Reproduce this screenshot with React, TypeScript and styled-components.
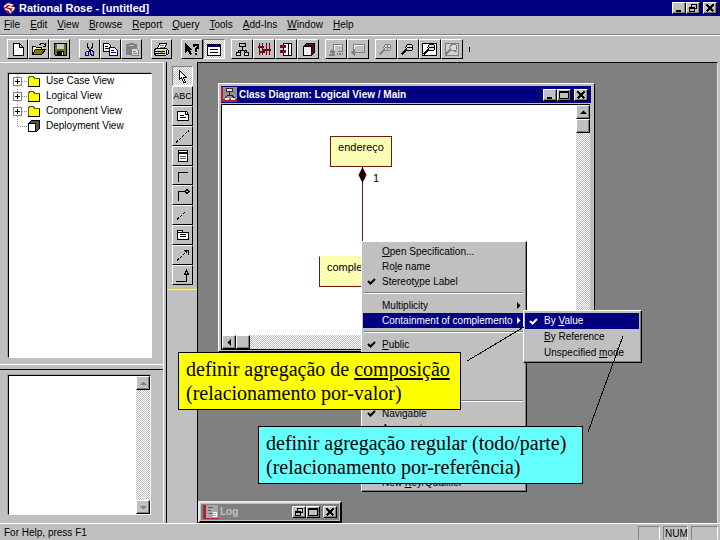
import React from "react";
import styled, { createGlobalStyle, css } from "styled-components";

const face = "#c0c0c0";
const shade = "#808080";
const navy = "#000080";
const maroon = "#701818";
const dither = "repeating-conic-gradient(#ffffff 0 25%, #c0c0c0 0 50%) 0 0 / 2px 2px";

const GlobalStyle = createGlobalStyle`
  * { box-sizing: border-box; }
  body { margin: 0; background: ${face}; }
  button, textarea {
    font: inherit; color: inherit; margin: 0; padding: 0;
    border: 0; border-radius: 0; background: none; text-align: left;
  }
  ul { list-style: none; margin: 0; padding: 0; }
  u { text-underline-offset: 1px; }
  svg { display: block; flex: none; }
`;

const raised = css`
  background: ${face};
  border: 1px solid;
  border-color: #ffffff #000000 #000000 #ffffff;
`;

const Shell = styled.div`
  position: relative;
  display: flex;
  flex-direction: column;
  min-height: 100vh;
  overflow: hidden;
  background: ${face};
  color: #000000;
  font: 10px/12px "Liberation Sans", Arial, sans-serif;
`;

const TitleBar = styled.header`
  display: flex;
  align-items: center;
  gap: 3px;
  height: 16px;
  padding: 0 3px 0 2px;
  background: ${navy};
  color: #ffffff;
`;

const Title = styled.h1`
  flex: 1;
  margin: 0;
  font-size: 10px;
  line-height: 14px;
  font-weight: bold;
  white-space: nowrap;
`;

const AppTitle = styled(Title)`
  font-size: 11px;
`;

const Controls = styled.div`
  display: flex;
`;

const ControlButton = styled.button<{ $gap?: boolean }>`
  ${raised}
  width: 14px;
  height: 12px;
  margin-left: ${(p) => (p.$gap ? 3 : 0)}px;
  box-shadow: inset -1px -1px ${shade};
  color: #000000;
`;

const MenuBar = styled.nav`
  display: flex;
  align-items: center;
  gap: 10px;
  height: 19px;
  padding: 0 4px;
  border-bottom: 1px solid ${shade};
`;

const Toolbar = styled.div`
  display: flex;
  align-items: center;
  height: 27px;
  padding: 0 0 0 7px;
  border-top: 1px solid #ffffff;
`;

const ToolGroup = styled.div<{ $wide?: boolean }>`
  display: flex;
  margin-right: ${(p) => (p.$wide ? 6 : 9)}px;
  > button { width: ${(p) => (p.$wide ? 22 : 21)}px; }
`;

const ToolButton = styled.button<{ $pressed?: boolean }>`
  ${raised}
  height: 20px;
  overflow: hidden;
  ${(p) =>
    p.$pressed &&
    css`
      background: ${dither};
      border-color: ${shade} #ffffff #ffffff ${shade};
    `}
`;

const TextGlyph = styled.span`
  display: block;
  text-align: center;
  font-size: 9px;
`;

const GripMark = styled.span`
  width: 1px;
  height: 5px;
  background: #000000;
`;

const Workspace = styled.main`
  display: grid;
  grid-template-columns: 163px 35px 1fr;
  flex: 1;
  padding-right: 2px;
`;

const Sidebar = styled.aside`
  display: grid;
  grid-template-rows: 302px 1fr;
  border-right: 1px solid #ffffff;
  border-top: 1px solid #ffffff;
`;

const TreePane = styled.section`
  display: flex;
  min-width: 0;
  padding: 10px 7px 6px 8px;
  border-bottom: 1px solid #ffffff;
`;

const NotesPane = styled.section`
  display: flex;
  min-width: 0;
  margin-top: 4px;
  padding: 5px 8px 8px 8px;
  border-top: 1px solid #000000;
`;

const Sunken = styled.div`
  display: flex;
  flex: 1;
  min-width: 0;
  margin-right: 4px;
  background: #ffffff;
  border: 1px solid;
  border-color: #000000 #ffffff #ffffff #000000;
  box-shadow: -1px -1px #a0a0a0;
`;

const SidebarEdge = styled(Sidebar)`
  margin-right: -1px;
  padding-right: 0;
`;

const Tree = styled.ul`
  padding: 0 0 0 4px;
`;

const TreeItem = styled.button`
  display: flex;
  align-items: center;
  gap: 5px;
  height: 14px;
  margin-bottom: 1px;
  white-space: nowrap;
  font-size: 10px;
`;

const Notes = styled.textarea`
  flex: 1;
  width: 0;
  min-width: 0;
  resize: none;
  outline: 0;
  background: #ffffff;
`;

const VScroll = styled.div`
  display: flex;
  flex: none;
  flex-direction: column;
  width: 14px;
  background: ${dither};
`;

const HScroll = styled.div`
  display: flex;
  height: 14px;
  background: ${dither};
`;

const ScrollButton = styled.button<{ $push?: boolean }>`
  ${raised}
  display: flex;
  align-items: center;
  justify-content: center;
  width: 14px;
  height: 14px;
  margin-top: ${(p) => (p.$push ? "auto" : 0)};
  box-shadow: inset -1px -1px ${shade};
`;

const Palette = styled.aside`
  padding: 4px 3px 0 5px;
  border-left: 1px solid #000000;
  border-right: 1px solid #000000;
  margin-left: 3px;
`;

const PaletteGrid = styled.div`
  display: grid;
  grid-template-rows: repeat(11, 1fr);
  height: 219px;
  > button { height: auto; width: 21px; }
`;

const PaletteEnd = styled.div`
  height: 2px;
  margin: 3px -3px 0 -5px;
  border-top: 1px solid #d8c850;
  border-bottom: 1px solid #f0e8b0;
`;

const Desktop = styled.section`
  position: relative;
  background: ${shade};
  border-top: 1px solid #000000;
  border-right: 1px solid #e0e0e0;
`;

const DiagramWindow = styled.section`
  position: absolute;
  left: 20px;
  top: 20px;
  width: 377px;
  height: 269px;
  display: flex;
  flex-direction: column;
  padding: 2px 3px 1px 2px;
  background: ${face};
  border: 1px solid;
  border-color: #ffffff #000000 #000000 #ffffff;
`;

const ChildTitle = styled.header`
  display: flex;
  align-items: center;
  gap: 2px;
  height: 17px;
  padding-right: 3px;
  background: ${navy};
  color: #ffffff;
`;

const DiagramView = styled.div`
  display: grid;
  grid-template-columns: 1fr 14px;
  grid-template-rows: 1fr 14px;
  flex: 1;
  margin: 1px 1px 0 0;
  border: 1px solid #000000;
  border-right: 0;
`;

const Canvas = styled.div`
  position: relative;
  overflow: hidden;
  background: #ffffff;
`;

const ClassBox = styled.div<{ $x: number; $y: number; $w: number; $open?: boolean }>`
  position: absolute;
  left: ${(p) => p.$x}px;
  top: ${(p) => p.$y}px;
  width: ${(p) => p.$w}px;
  height: 31px;
  padding-top: 4px;
  text-align: center;
  font-size: 11px;
  line-height: 13px;
  border: 1px solid ${maroon};
  border-top-color: ${(p) => (p.$open ? "#ffffa8" : maroon)};
  background: repeating-conic-gradient(#ffff78 0 25%, #fffff0 0 50%) 0 0 / 4px 4px;
`;

const Link = styled.svg`
  position: absolute;
  left: 134px;
  top: 61px;
`;

const Multiplicity = styled.span`
  position: absolute;
  left: 151px;
  top: 66px;
  font-size: 11px;
  line-height: 14px;
`;

const LogWindow = styled.section`
  position: absolute;
  left: 0;
  bottom: 0;
  width: 144px;
  display: flex;
  align-items: center;
  gap: 2px;
  height: 22px;
  padding: 0 3px;
  background: ${shade};
  border: 2px solid;
  border-color: #e8e8e8 #000000 #000000 #e8e8e8;
  box-shadow: inset 0 0 0 1px ${face};
  color: ${face};
`;

const Menu = styled.div<{ $x: number; $y: number; $w: number }>`
  position: absolute;
  left: ${(p) => p.$x}px;
  top: ${(p) => p.$y}px;
  width: ${(p) => p.$w}px;
  padding: 2px 2px 1px 1px;
  ${raised}
  box-shadow: inset -1px -1px ${shade};
`;

const MenuItem = styled.button<{ $active?: boolean; $tall?: boolean }>`
  display: grid;
  grid-template-columns: 19px 1fr 9px;
  align-items: center;
  width: 100%;
  height: ${(p) => (p.$tall ? 16 : 15)}px;
  white-space: nowrap;
  background: ${(p) => (p.$active ? navy : "transparent")};
  color: ${(p) => (p.$active ? "#ffffff" : "#000000")};
`;

const MenuSpace = styled.div<{ $rows: number }>`
  height: ${(p) => p.$rows * 15}px;
`;

const Separator = styled.div`
  height: 2px;
  margin: 3px 1px 4px;
  border-top: 1px solid ${shade};
  border-bottom: 1px solid #ffffff;
`;

const Callout = styled.aside<{ $x: number; $y: number; $w: number; $fill: string }>`
  position: absolute;
  left: ${(p) => p.$x}px;
  top: ${(p) => p.$y}px;
  width: ${(p) => p.$w}px;
  padding: 4px 7px;
  border: 1px solid #000000;
  background: ${(p) => p.$fill};
  font: 20px/24px "Liberation Serif", "Times New Roman", serif;
  white-space: nowrap;
  u { text-underline-offset: 2px; }
`;

const Pointers = styled.svg`
  position: absolute;
  left: 0;
  top: 0;
  pointer-events: none;
`;

const StatusBar = styled.footer`
  display: flex;
  align-items: center;
  gap: 3px;
  height: 17px;
  padding: 2px 2px 0 4px;
  border-top: 1px solid #ffffff;
`;

const StatusText = styled.span`
  flex: 1;
`;

const StatusCell = styled.span<{ $w: number }>`
  width: ${(p) => p.$w}px;
  height: 14px;
  padding-left: 1px;
  line-height: 14px;
  border: 1px solid;
  border-color: ${shade} #ffffff ${face} ${shade};
`;

type IconName =
  | "new" | "open" | "save" | "cut" | "copy" | "paste" | "print" | "help" | "props"
  | "class" | "interaction" | "component" | "deployment" | "parent" | "previous"
  | "zoomin" | "zoomout" | "fit" | "undofit";

const lens = (c: string) => (
  <>
    <path d="M8 9l-4.500 4.500" stroke={c} strokeWidth="2" fill="none" />
    <circle cx="11.500" cy="6.500" r="3.500" stroke={c} fill="#d8d8d8" />
  </>
);

const art: Record<IconName, React.ReactNode> = {
  new: <path d="M5.500 2.500h6l4 4v8h-10zM11.500 2.500v4h4" fill="#fff" stroke="#000" />,
  open: (
    <>
      <path d="M3.500 13.500v-8h3l1 1h5v3" fill="#ffff90" stroke="#000" />
      <path d="M3.500 13.500l3-5h10l-4 5z" fill="#808000" stroke="#000" />
      <path d="M10.500 3.500l2-1h2l2 2M16.500 2v3h-3" fill="none" stroke="#000" />
    </>
  ),
  save: (
    <>
      <path d="M4.500 2.500h12v12h-11l-1-1z" fill="#707010" stroke="#000" />
      <path d="M7 3h7v5h-7z" fill="#c8c8c0" />
      <path d="M7 10h7v4h-7z" fill="#000" />
      <path d="M12 11h1v3h-1z" fill="#fff" />
    </>
  ),
  cut: (
    <>
      <path d="M7.500 2v4l3 4M12.500 2v4l-4 5" fill="none" stroke="#000" />
      <path d="M6.500 10.500h2v4h-3v-3zM10.500 9.500h2l1 2v3h-2l-1-2z" fill="none" stroke={navy} />
    </>
  ),
  copy: (
    <>
      <path d="M2.500 2.500h5l2 2v6h-7z" fill="#fff" stroke="#000" />
      <path d="M4 5.500h3M4 7.500h4" stroke="#000" />
      <path d="M8.500 6.500h5l3 3v5h-8z" fill="#fff" stroke={navy} />
      <path d="M10 9.500h3M10 11.500h5" stroke={navy} />
    </>
  ),
  paste: (
    <>
      <path d="M4 3h3V2h5v1h3v11H4z" fill={shade} />
      <path d="M7 4.500h5" stroke="#c0c0c0" />
      <path d="M9.500 7.500h5l2 2v5h-7z" fill="#d8d8d8" stroke={shade} />
      <path d="M11 10.500h3M11 12.500h4" stroke={shade} />
    </>
  ),
  print: (
    <>
      <path d="M5.500 7.500l2-5h7l-2 5z" fill="#fff" stroke="#000" />
      <path d="M2.500 8.500l2-1h10l2 2v3l-3 2h-10l-1-2z" fill="#d8d8d8" stroke="#000" />
      <path d="M3 10.500h10M3 12.500h10M14.500 9v5" stroke="#000" />
      <path d="M8 11.500h3" stroke="#c0c000" />
      <path d="M8 4.500h4M8 6h4" stroke={shade} />
    </>
  ),
  help: (
    <>
      <path d="M3 2v10l3-2 2 4 2-1-2-4h3z" fill="#000" />
      <path d="M11.500 6V3.500h4V7L13.500 8.500v2M13.500 12v2" fill="none" stroke="#000" strokeWidth="2" />
    </>
  ),
  props: (
    <>
      <path d="M3.500 3.500h13v11h-13z" fill="#fff" stroke="#000" />
      <path d="M4 5h12" stroke={navy} strokeWidth="2" />
      <path d="M6 8.500h8M6 11.500h8" stroke="#000" />
    </>
  ),
  class: (
    <>
      <path d="M7.500 2.500h6v3h-6zM10.500 6v3M6.500 11v-2h8v2M8.500 9.500v4M12.500 9.500v4" fill="none" stroke="#000" />
      <path d="M4.500 11.500h4v3h-4zM12.500 11.500h4v3h-4z" fill="#d8d8d8" stroke="#000" />
    </>
  ),
  interaction: (
    <>
      <path d="M5.500 2v12M8.500 2v12M12.500 2v12M15.500 2v12" stroke="#501010" />
      <path d="M4 5.500h6M8 8.500h9M5 10.500h6" stroke="#800020" strokeWidth="2" />
    </>
  ),
  component: (
    <>
      <path d="M7.500 2.500h8v12h-8z" fill="#fff" stroke="#000" />
      <path d="M4 4h6v3H4zM4 9h6v3H4z" fill="#800040" />
      <path d="M12 3h1v11h-1z" fill="#000" />
    </>
  ),
  deployment: (
    <>
      <path d="M5.500 5.500l3-3h8v9l-3 3h-8z" fill="#501010" stroke="#000" />
      <path d="M5.500 5.500h8v9h-8z" fill="#f0f0f0" stroke="#000" />
    </>
  ),
  parent: (
    <>
      <path d="M7.500 9V3.500h9v7h-5" fill="none" stroke={shade} />
      <path d="M8.500 9v-4.500h7" fill="none" stroke="#fff" />
      <path d="M3 13.500h6M6.500 9v4M4 10.500h5M5 9.500h3M11 13h1M13 13h2M16 13h1" fill="none" stroke={shade} strokeWidth="2" />
    </>
  ),
  previous: (
    <>
      <path d="M5.500 9V3.500h11v8H6" fill="none" stroke={shade} />
      <path d="M6.500 8V4.500h9" fill="none" stroke="#fff" />
      <path d="M3 11.500l4-4v8z" fill={shade} />
    </>
  ),
  zoomin: <>{lens(shade)}<path d="M9 6.500h5M11.500 4v5" stroke={shade} /></>,
  zoomout: <>{lens("#000")}<path d="M9 6.500h5" stroke="#000" /></>,
  fit: (
    <>
      <path d="M2.500 2.500h14v12h-14z" fill="#fff" stroke="#000" />
      {lens("#000")}
      <path d="M9 6.500h5" stroke="#000" />
    </>
  ),
  undofit: (
    <>
      <path d="M3.500 2.500h13v12h-13z" fill="#d0d0d0" stroke={shade} />
      {lens(shade)}
      <path d="M8 5.500l2-2h4M12 10.500h3" stroke={shade} fill="none" />
    </>
  ),
};

const Icon = ({ name }: { name: IconName }) => (
  <svg width="19" height="17" viewBox="0 0 19 17" shapeRendering="crispEdges" aria-hidden>
    {art[name]}
  </svg>
);

const Tool = ({ name, pressed }: { name: IconName; pressed?: boolean }) => (
  <ToolButton type="button" aria-label={name} $pressed={pressed}>
    <Icon name={name} />
  </ToolButton>
);

const toolGroups: { wide?: boolean; tools: IconName[] }[] = [
  { tools: ["new", "open", "save"] },
  { tools: ["cut", "copy", "paste"] },
  { tools: ["print"] },
  { wide: true, tools: ["help", "props"] },
  { wide: true, tools: ["class", "interaction", "component", "deployment"] },
  { wide: true, tools: ["parent", "previous"] },
  { wide: true, tools: ["zoomin", "zoomout", "fit", "undofit"] },
];

const paletteArt: [string, React.ReactNode][] = [
  ["Selection", <path d="M6.500 3.500v9l2-2 2 5h2l-2-5h3z" fill="#fff" stroke="#000" />],
  ["Text", null],
  ["Note", <><path d="M4.500 4.500h9l2 3v6h-11z" fill="#fff" stroke="#000" /><path d="M12.500 4v3h3M7 8.500h4M7 10.500h6" stroke="#000" fill="none" /></>],
  ["Anchor", <path d="M3 15.500L16 3.500" stroke="#000" strokeDasharray="3 1" />],
  ["Class", <><path d="M5.500 3.500h9v11h-9z" fill="#fff" stroke="#000" /><path d="M5 6h10" stroke="#000" strokeWidth="2" /><path d="M7 9.500h6M7 11.500h6" stroke="#606060" /></>],
  ["Association", <path d="M5.500 15V5.500H15" stroke="#000" fill="none" />],
  ["Aggregation", <path d="M5.500 15V5.500H12l2-2 2 2-2 2-2-2" stroke="#000" fill="none" />],
  ["Link attribute", <path d="M4 13.500L13 5.500" stroke="#000" strokeDasharray="3 1" />],
  ["Package", <><path d="M4.500 13.500v-9h5v2h6v7z" fill="#fff" stroke="#000" /><path d="M5 6.500h5M7 8.500h6M7 10.500h6" stroke="#000" /></>],
  ["Dependency", <><path d="M4 14.500L14 5.500" stroke="#000" strokeDasharray="3 1" /><path d="M11 4.500h4.500V9M12 6l3-2" stroke="#000" fill="none" /></>],
  ["Generalization", <path d="M3 15.500h10.500V9M11.500 8.500l2-4 2 4z" stroke="#000" fill="none" />],
];

const CheckMark = () => (
  <svg width="18" height="9" viewBox="0 0 18 9" aria-hidden>
    <path d="M5 4l2.500 2.500L12 2" fill="none" stroke="currentColor" strokeWidth="2" />
  </svg>
);

const Arrow = ({ dir, color = "#000" }: { dir: "up" | "down" | "left" | "right"; color?: string }) => {
  const d = {
    up: "M0 5h7L3.500 1.500z",
    down: "M0 2h7L3.500 5.500z",
    left: "M5 0v7L1.500 3.500z",
    right: "M2 0v7l3.500-3.500z",
  }[dir];
  return (
    <svg width="7" height="7" viewBox="0 0 7 7" aria-hidden>
      <path d={d} fill={color} />
    </svg>
  );
};

const glyphs = {
  minimize: <path d="M3 8h5" strokeWidth="2" />,
  restore: <><path d="M4.500 4V1.500h5v4H8" /><path d="M2.500 4.500h5v4h-5zM2 5h6" /></>,
  maximize: <><path d="M1.500 1.500h9v7h-9z" /><path d="M1 2h10" strokeWidth="2" /></>,
  close: <path d="M2.500 1.500l7 7M9.500 1.500l-7 7" strokeWidth="2" />,
};

const Control = ({ kind, gap }: { kind: keyof typeof glyphs; gap?: boolean }) => (
  <ControlButton type="button" aria-label={kind} $gap={gap}>
    <svg width="12" height="10" viewBox="0 0 12 10" fill="none" stroke="#000" shapeRendering="crispEdges">
      {glyphs[kind]}
    </svg>
  </ControlButton>
);

const DiagramIcon = () => (
  <svg width="16" height="15" viewBox="0 0 16 15" shapeRendering="crispEdges" aria-hidden>
    <path d="M0 0h16v15H0z" fill="#b02030" />
    <path d="M2 0h14v12H2z" fill="#909090" />
    <path d="M5.500 1.500h6v3h-6z" fill="#e0e0e0" stroke="#303030" />
    <path d="M8.500 5v3M4.500 11l2-3h4l3 3" stroke="#202020" fill="none" />
    <path d="M4 11h4v2H4zM10 11h4v2h-4z" fill="#f0e0e0" />
  </svg>
);

const FolderRow = ({ label }: { label: string }) => (
  <li>
    <TreeItem type="button">
      <svg width="28" height="14" viewBox="0 0 28 14" shapeRendering="crispEdges" aria-hidden>
        <path d="M4.500 0v14M9 7.500h6" stroke="#909090" strokeDasharray="1 1" />
        <path d="M0.500 3.500h8v8h-8z" fill="#fff" stroke={shade} />
        <path d="M2 7.500h5M4.500 5v5" stroke="#000" />
        <path d="M15.500 12.500v-8l1-2h4l1 2h5v8z" fill="#ffff00" stroke="#606000" />
        <path d="M15 12.500h12M26.500 5v8" stroke="#000" />
      </svg>
      {label}
    </TreeItem>
  </li>
);

const Hot = ({ text, at = 0 }: { text: string; at?: number }) => (
  <span>
    {text.slice(0, at)}
    <u>{text[at]}</u>
    {text.slice(at + 1)}
  </span>
);

type Entry =
  | { text: string; hot?: number; checked?: boolean; sub?: boolean; active?: boolean }
  | { rows: number }
  | null;

const contextEntries: Entry[] = [
  { text: "Open Specification...", hot: 0 },
  { text: "Role name", hot: 2 },
  { text: "Stereotype Label", hot: 7, checked: true },
  null,
  { text: "Multiplicity", sub: true },
  { text: "Containment of complemento", sub: true, active: true },
  null,
  { text: "Public", hot: 0, checked: true },
  { rows: 3 },
  null,
  { text: "Navigable", checked: true },
  { text: "Aggregate" },
  { rows: 2 },
  null,
  { text: "New Key/Qualifier", hot: 4 },
];

const containmentEntries: Entry[] = [
  { text: "By Value", hot: 3, checked: true, active: true },
  { text: "By Reference", hot: 0 },
  { text: "Unspecified mode", hot: 12 },
];

const Entries = ({ items, tall }: { items: Entry[]; tall?: boolean }) => (
  <>
    {items.map((e, i) => {
      if (!e) return <Separator key={i} role="separator" />;
      if ("rows" in e) return <MenuSpace key={i} $rows={e.rows} />;
      return (
        <MenuItem key={i} type="button" role="menuitem" $active={e.active} $tall={tall}>
          <span>{e.checked && <CheckMark />}</span>
          {e.hot === undefined ? <span>{e.text}</span> : <Hot text={e.text} at={e.hot} />}
          {e.sub && <Arrow dir="right" color={e.active ? "#fff" : "#000"} />}
        </MenuItem>
      );
    })}
  </>
);

const menus = ["File", "Edit", "View", "Browse", "Report", "Query", "Tools", "Add-Ins", "Window", "Help"];

export default function App() {
  return (
    <Shell>
      <GlobalStyle />
      <TitleBar>
        <svg width="14" height="14" viewBox="0 0 14 14" aria-hidden>
          <path d="M1 6l3-4 4-1 4 4 1 4-4 4-5-1z" fill="#901828" />
          <path d="M2 6l4-3 4 1-3 2 5 1-2 3M3 8l4 1 2 3" fill="none" stroke="#fff" strokeWidth="1.500" />
        </svg>
        <AppTitle>Rational Rose - [untitled]</AppTitle>
        <Controls>
          <Control kind="minimize" />
          <Control kind="restore" />
          <Control kind="close" gap />
        </Controls>
      </TitleBar>

      <MenuBar>
        {menus.map((m) => (
          <button type="button" key={m}><Hot text={m} /></button>
        ))}
      </MenuBar>

      <Toolbar>
        {toolGroups.map((g, i) => (
          <ToolGroup key={i} $wide={g.wide}>
            {g.tools.map((t) => <Tool key={t} name={t} pressed={t === "props"} />)}
          </ToolGroup>
        ))}
        <GripMark />
      </Toolbar>

      <Workspace>
        <SidebarEdge>
          <TreePane>
            <Sunken>
              <Tree>
                <FolderRow label="Use Case View" />
                <FolderRow label="Logical View" />
                <FolderRow label="Component View" />
                <li>
                  <TreeItem type="button">
                    <svg width="28" height="14" viewBox="0 0 28 14" shapeRendering="crispEdges" aria-hidden>
                      <path d="M4.500 0v8M5 7.500h10" stroke="#909090" strokeDasharray="1 1" fill="none" />
                      <path d="M15.500 4.500l3-3h8v8l-3 3h-8z" fill="#505050" stroke="#000" />
                      <path d="M15.500 4.500h7v8h-7z" fill="#fff" stroke="#000" />
                    </svg>
                    Deployment View
                  </TreeItem>
                </li>
              </Tree>
            </Sunken>
          </TreePane>
          <NotesPane>
            <Sunken>
              <Notes aria-label="Documentation" />
              <VScroll>
                <ScrollButton type="button" aria-label="Scroll up"><Arrow dir="up" color={shade} /></ScrollButton>
                <ScrollButton type="button" aria-label="Scroll down" $push><Arrow dir="down" color={shade} /></ScrollButton>
              </VScroll>
            </Sunken>
          </NotesPane>
        </SidebarEdge>

        <Palette>
          <PaletteGrid>
            {paletteArt.map(([name, drawing], i) => (
              <ToolButton type="button" key={name} aria-label={name} $pressed={i === 0}>
                {drawing ? (
                  <svg width="19" height="18" viewBox="0 0 19 18" shapeRendering="crispEdges">{drawing}</svg>
                ) : (
                  <TextGlyph>ABC</TextGlyph>
                )}
              </ToolButton>
            ))}
          </PaletteGrid>
          <PaletteEnd />
        </Palette>

        <Desktop>
          <DiagramWindow>
            <ChildTitle>
              <DiagramIcon />
              <Title as="h2">Class Diagram: Logical View / Main</Title>
              <Controls>
                <Control kind="minimize" />
                <Control kind="maximize" />
                <Control kind="close" gap />
              </Controls>
            </ChildTitle>
            <DiagramView>
              <Canvas>
                <Link width="12" height="90" viewBox="0 0 12 90">
                  <path d="M6.500 0v90" stroke={maroon} shapeRendering="crispEdges" />
                  <path d="M6.500 1l4 8-4 8-4-8z" fill="#280000" />
                </Link>
                <ClassBox $x={108} $y={31} $w={62}>endereço</ClassBox>
                <ClassBox $x={97} $y={151} $w={82} $open>complemento</ClassBox>
                <Multiplicity>1</Multiplicity>
              </Canvas>
              <VScroll>
                <ScrollButton type="button" aria-label="Scroll up"><Arrow dir="up" /></ScrollButton>
                <ScrollButton type="button" aria-label="Vertical thumb" />
              </VScroll>
              <HScroll>
                <ScrollButton type="button" aria-label="Scroll left"><Arrow dir="left" /></ScrollButton>
                <ScrollButton type="button" aria-label="Horizontal thumb" />
              </HScroll>
            </DiagramView>
          </DiagramWindow>

          <LogWindow>
            <svg width="15" height="14" viewBox="0 0 15 14" shapeRendering="crispEdges" aria-hidden>
              <path d="M0 0h15v14H0z" fill="#b02030" />
              <path d="M3 0h12v13H3z" fill="#a8a8a8" />
              <path d="M5 2.500h5M5 5.500h3M6 8.500h3" stroke="#606060" />
              <path d="M10 7.500h4M10 9.500h4M10 11.500h4M13.500 7v5" stroke="#fff" />
            </svg>
            <Title as="h2">Log</Title>
            <Controls>
              <Control kind="restore" />
              <Control kind="maximize" />
              <Control kind="close" gap />
            </Controls>
          </LogWindow>
        </Desktop>
      </Workspace>

      <StatusBar>
        <StatusText>For Help, press F1</StatusText>
        <StatusCell $w={22} />
        <StatusCell $w={25}>NUM</StatusCell>
        <StatusCell $w={27} />
      </StatusBar>

      <Menu role="menu" $x={361} $y={241} $w={166}>
        <Entries items={contextEntries} />
      </Menu>
      <Menu role="menu" $x={523} $y={310} $w={119}>
        <Entries items={containmentEntries} tall />
      </Menu>

      <Callout $x={178} $y={352} $w={283} $fill="#ffff00">
        definir agregação de <u>composição</u>
        <br />
        (relacionamento por-valor)
      </Callout>
      <Callout $x={258} $y={426} $w={325} $fill="#66ffff">
        definir agregação regular (todo/parte)
        <br />
        (relacionamento por-referência)
      </Callout>

      <Pointers width="640" height="440" viewBox="0 0 640 440" aria-hidden>
        <path d="M524 327L467 361M623 336L588 432" stroke="#000" fill="none" shapeRendering="crispEdges" />
      </Pointers>
    </Shell>
  );
}
